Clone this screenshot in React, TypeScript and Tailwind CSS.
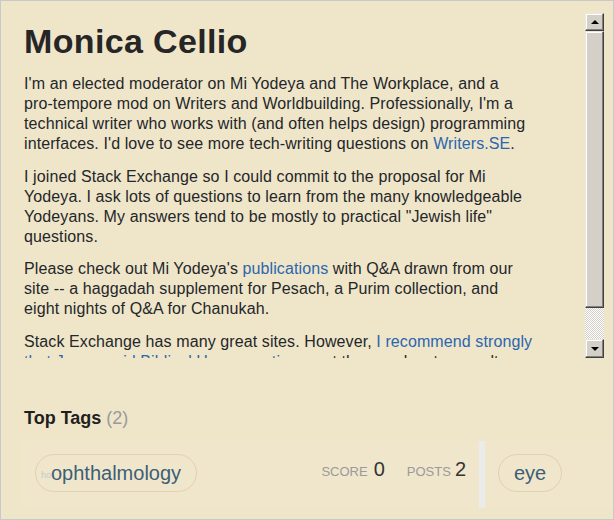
import React from "react";

function ArrowUp() {
  return <div className="w-0 h-0 border-l-[4px] border-r-[4px] border-b-[4px] border-l-transparent border-r-transparent border-b-black" />;
}
function ArrowDown() {
  return <div className="w-0 h-0 border-l-[4px] border-r-[4px] border-t-[4px] border-l-transparent border-r-transparent border-t-black" />;
}

const bevel =
  "bg-[#d4d0c8] border border-t-[#e8e6e0] border-l-[#e8e6e0] border-r-[#404040] border-b-[#404040] shadow-[inset_-1px_-1px_0_#808080,inset_1px_1px_0_#ffffff]";

function Scrollbar() {
  return (
    <div className="w-[19px] mt-[12px] mr-[9px] flex flex-col shrink-0">
      <div className={`h-[18px] flex items-center justify-center ${bevel}`}>
        <ArrowUp />
      </div>
      <div className={`h-[277px] ${bevel}`} />
      <div className="h-[31px] bg-[repeating-conic-gradient(#d4d0c8_0%_25%,#ffffff_0%_50%)] bg-[length:2px_2px]" />
      <div className={`h-[19px] flex items-center justify-center ${bevel}`}>
        <ArrowDown />
      </div>
    </div>
  );
}

function Tag({ name, faint }: { name: string; faint?: boolean }) {
  return (
    <span className="relative inline-flex items-center h-[38px] px-[15px] rounded-full border border-[#e0d1b1] text-[20px] leading-[23px] text-[#3d5e76]">
      {faint && (
        <span className="absolute left-[5px] top-[15px] text-[9px] leading-[10px] text-[#c3cad1]">ho</span>
      )}
      {name}
    </span>
  );
}

export default function App() {
  const link = "text-[#2a67ad]";
  return (
    <div className="w-[614px] h-[520px] bg-[#efe5c9] border border-[#c9c9c9] overflow-hidden text-[#242729] [font-family:Liberation_Sans,Arial,sans-serif]">
      <div className="flex h-[357px]">
        <div className="flex-1 overflow-hidden pl-[23px]">
          <h1 className="text-[34px] tracking-[0.35px] leading-[38px] font-bold mt-[21px] mb-[14px] text-[#262626]">
            Monica Cellio
          </h1>
          <div className="w-[510px] text-[16px] leading-[20px] tracking-[0.1px]">
            <p className="mb-[12.5px]">
              I'm an elected moderator on Mi Yodeya and The Workplace, and a pro&#8209;tempore mod on Writers and
              Worldbuilding. Professionally, I'm a technical writer who works with (and often helps design)
              programming interfaces. I'd love to see more tech-writing questions on{" "}
              <span className={link}>Writers.SE</span>.
            </p>
            <p className="mb-[12.5px]">
              I joined Stack Exchange so I could commit to the proposal for Mi Yodeya. I ask lots of questions to
              learn from the many knowledgeable Yodeyans. My answers tend to be mostly to practical "Jewish life"
              questions.
            </p>
            <p className="mb-[12.5px]">
              Please check out Mi Yodeya's <span className={link}>publications</span> with Q&amp;A drawn from our
              site -- a haggadah supplement for Pesach, a Purim collection, and eight nights of Q&amp;A for
              Chanukah.
            </p>
            <p className="mb-[12.5px]">
              Stack Exchange has many great sites. However,{" "}
              <span className={link}>I recommend strongly that Jews avoid Biblical Hermeneutics</span> or, at the
              very least, consult your rabbi before participating there.
            </p>
          </div>
        </div>
        <Scrollbar />
      </div>

      <div className="pl-[21px] pt-[49px]">
        <h2 className="pl-[2px] text-[18px] leading-[23px] font-bold text-[#1f1f1f]">
          Top Tags <span className="font-normal text-[#9a9a9a]">(2)</span>
        </h2>
        <div className="mt-[11px] flex h-[67px]">
          <div className="w-[457px] flex items-start justify-between pl-[13px] pr-[13px] pt-[13px] bg-[#f0e6cb]">
            <Tag name="ophthalmology" faint />
            <div className="flex items-baseline mt-[3.5px] leading-[23px]">
              <span className="text-[13px] text-[#9a9a9a]">SCORE</span>
              <span className="text-[20px] ml-[6px] text-[#333333]">0</span>
              <span className="text-[13px] text-[#9a9a9a] ml-[22px]">POSTS</span>
              <span className="text-[20px] ml-[4px] text-[#333333]">2</span>
            </div>
          </div>
          <div className="w-[6px] bg-[#ebebeb]" />
          <div className="flex-1 pl-[13px] pt-[13px] bg-[#f0e6cb]">
            <Tag name="eye" />
          </div>
        </div>
      </div>
    </div>
  );
}
